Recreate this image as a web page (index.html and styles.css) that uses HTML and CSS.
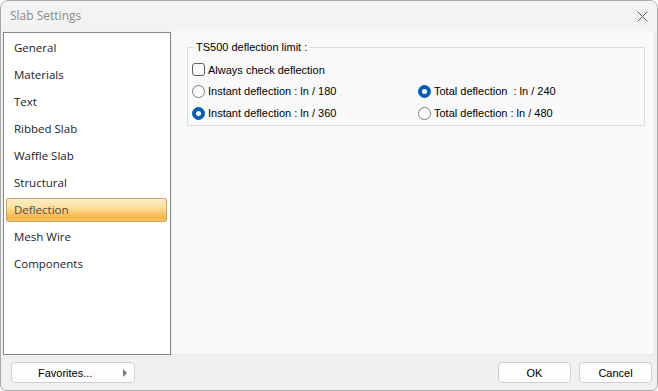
FILE: index.html
```html
<!DOCTYPE html>
<html lang="en">
<head>
    <meta charset="UTF-8">
    <meta name="viewport" content="width=device-width, initial-scale=1.0">
    <title>Slab Settings</title>
    <link rel="stylesheet" href="styles.css">
</head>
<body>
    <div class="window">
        <div class="titlebar">
            <span class="title">Slab Settings</span>
            <svg class="close" width="11" height="11" viewBox="0 0 11 11">
                <path d="M0.5 0.5 L10.5 10.5 M10.5 0.5 L0.5 10.5" stroke="#5c5c5c" stroke-width="1" fill="none"/>
            </svg>
        </div>
        <div class="main">
            <ul class="nav">
                <li>General</li>
                <li>Materials</li>
                <li>Text</li>
                <li>Ribbed Slab</li>
                <li>Waffle Slab</li>
                <li>Structural</li>
                <li class="selected">Deflection</li>
                <li>Mesh Wire</li>
                <li>Components</li>
            </ul>
            <div class="panel">
                <fieldset class="group">
                    <legend>TS500 deflection limit :</legend>
                    <div class="options">
                        <div class="option wide"><span class="check"></span>Always check deflection</div>
                        <div class="option"><span class="radio"></span>Instant deflection : ln / 180</div>
                        <div class="option"><span class="radio on"></span>Total deflection&nbsp; : ln / 240</div>
                        <div class="option"><span class="radio on"></span>Instant deflection : ln / 360</div>
                        <div class="option"><span class="radio"></span>Total deflection : ln / 480</div>
                    </div>
                </fieldset>
            </div>
        </div>
        <div class="footer">
            <button class="btn favorites">Favorites...<span class="arrow"></span></button>
            <div class="actions">
                <button class="btn">OK</button>
                <button class="btn">Cancel</button>
            </div>
        </div>
    </div>
</body>
</html>
```

FILE: styles.css
```css
body { margin: 0; background: #fff; font-family: "Liberation Sans", Arial, sans-serif; font-size: 11px; color: #000; }
.window { width: 658px; height: 391px; box-sizing: border-box; border: 1px solid #a9a9a9; border-radius: 8px 8px 6px 6px; background: #f0f0f0; display: flex; flex-direction: column; overflow: hidden; }
.titlebar { height: 30px; background: #f3f3f3; display: flex; align-items: center; justify-content: space-between; padding: 0 9px 0 9px; flex-shrink: 0; }
.title { font-family: "Open Sans", "Noto Sans", sans-serif; font-size: 12px; color: #8c8c8c; padding-bottom: 1px; }
.close { margin-right: 0; margin-top: 1px; }
.main { display: flex; height: 324px; flex-shrink: 0; }
.nav { list-style: none; box-sizing: border-box; margin: 1px 0 0 2px; padding: 3px 3px 0 2px; width: 168px; height: 323px; background: #fff; border: 1px solid #828790; display: flex; flex-direction: column; gap: 3px; }
.nav li { height: 22px; line-height: 22px; padding-left: 7px; border: 1px solid transparent; border-radius: 2px; font-family: "Open Sans", "Noto Sans", sans-serif; font-size: 11.5px; color: #1a1a2a; }
.nav li.selected { border-color: #c9a766; color: #4b4b4b; background: linear-gradient(#fdedc6 0%, #fcdf9f 40%, #fbcf7c 55%, #f7b447 85%, #f8c163 100%); }
.panel { flex: 1; margin: 0 2px 0 1px; background: #f9f9f9; border-right: 1px solid #e8e8e8; border-bottom: 1px solid #e8e8e8; }
.group { margin: 10px 0 0 15px; width: 458px; box-sizing: border-box; padding: 5px 4px 1px 4px; border: 1px solid #dcdcdc; }
.group legend { padding: 0 2px; margin-left: 2px; line-height: 13px; font-size: 11px; }
.options { display: grid; grid-template-columns: 226px 1fr; grid-template-rows: 21px 22px 22px; }
.option { display: flex; align-items: center; gap: 3px; white-space: nowrap; }
.option.wide { grid-column: 1 / 3; }
.check { width: 11px; height: 11px; border: 1px solid #5f5f5f; border-radius: 3px; background: #fbfbfb; }
.radio { width: 11px; height: 11px; border: 1px solid #7c7c7c; border-radius: 50%; background: #fbfbfb; position: relative; }
.radio.on { background: #0060b8; border-color: #0060b8; }
.radio.on::after { content: ""; position: absolute; left: 3px; top: 3px; width: 5px; height: 5px; border-radius: 50%; background: #fff; }
.footer { flex: 1; display: flex; justify-content: space-between; align-items: flex-start; padding: 7px 5px 0 10px; }
.actions { display: flex; gap: 8px; }
.btn { width: 73px; height: 21px; border: 1px solid #d0d0d0; border-radius: 4px; background: #fdfdfd; font-family: "Liberation Sans", Arial, sans-serif; font-size: 11px; color: #000; padding: 0; }
.btn.favorites { width: 124px; display: flex; align-items: center; padding-left: 26px; position: relative; }
.arrow { position: absolute; right: 7px; top: 6px; width: 0; height: 0; border-top: 4px solid transparent; border-bottom: 4px solid transparent; border-left: 4px solid #7a7a7a; }
```
